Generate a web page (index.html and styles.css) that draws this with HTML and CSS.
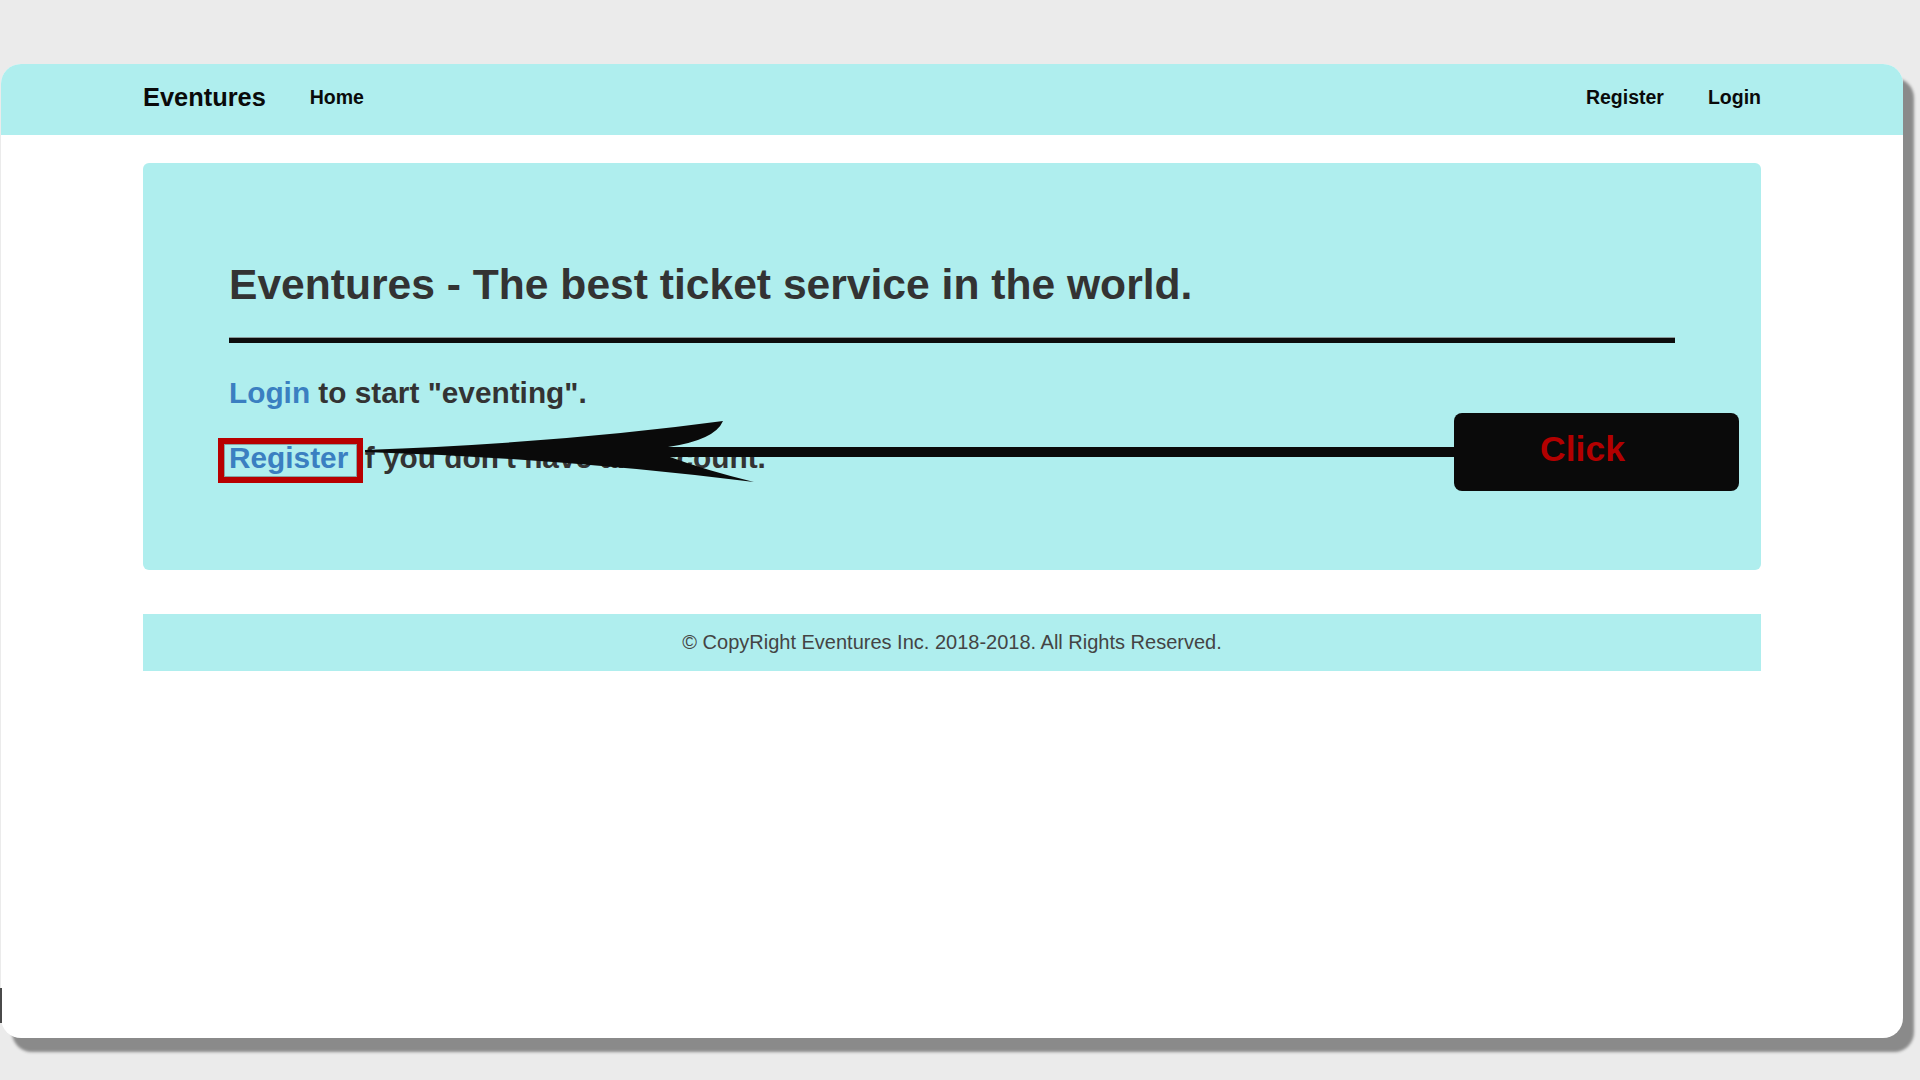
FILE: index.html
```html
<!DOCTYPE html>
<html lang="en">
<head>
<meta charset="utf-8">
<title>Eventures</title>
<link rel="stylesheet" href="styles.css">
</head>
<body>
<div class="page">
  <div class="card">
    <nav class="navbar">
      <div class="container nav-inner">
        <div class="nav-left">
          <a class="brand" href="#">Eventures</a>
          <a class="nav-link" href="#">Home</a>
        </div>
        <div class="nav-right">
          <a class="nav-link" href="#">Register</a>
          <a class="nav-link" href="#">Login</a>
        </div>
      </div>
    </nav>
    <main class="container">
      <section class="jumbotron">
        <h1 class="title">Eventures - The best ticket service in the world.</h1>
        <hr class="rule">
        <p class="lead"><a class="link" href="#">Login</a> to start "eventing".</p>
        <p class="lead lead-second"><a class="link" href="#">Register</a> if you don't have an account.</p>
      </section>
      <footer class="footer">© CopyRight Eventures Inc. 2018-2018. All Rights Reserved.</footer>
    </main>
  </div>
</div>

<div class="mark-box"></div>
<svg class="arrow" width="1920" height="1080" viewBox="0 0 1920 1080" aria-hidden="true">
  <path d="M 365 450 Q 560 443 723 421 Q 715 440 668 447 L 1458 447 L 1458 457 L 670 457 Q 705 470 754 482 Q 560 458 365 452 Z" fill="#0a0a0a"/>
</svg>
<div class="click-box"><span class="click-text">Click</span></div>
<div class="edge-mark"></div>
</body>
</html>
```
FILE: styles.css
```css
html, body {
  margin: 0;
  padding: 0;
}

body {
  background: #ebebeb;
  font-family: "Liberation Sans", Arial, Helvetica, sans-serif;
  width: 1920px;
  height: 1080px;
  overflow: hidden;
}

.page {
  padding: 64px 0 0 1px;
}

.card {
  width: 1902px;
  height: 974px;
  background: #ffffff;
  border-radius: 20px;
  box-shadow: 11px 14px 3px #8a8a8a;
  overflow: hidden;
}

.container {
  width: 1618px;
  margin: 0 auto;
}

.navbar {
  height: 71px;
  background: #afeeee;
}

.nav-inner {
  height: 100%;
  box-sizing: border-box;
  padding-bottom: 4px;
  display: flex;
  align-items: center;
  justify-content: space-between;
}

.nav-left,
.nav-right {
  display: flex;
  align-items: center;
  gap: 44px;
}

.brand {
  font-size: 25.4px;
  font-weight: bold;
  color: #0a0a0a;
  text-decoration: none;
}

.nav-link {
  font-size: 19.5px;
  font-weight: bold;
  color: #0a0a0a;
  text-decoration: none;
}

.jumbotron {
  margin-top: 28px;
  background: #afeeee;
  border-radius: 6px;
  padding: 98px 86px 92px;
}

.title {
  margin: 0;
  font-size: 42.6px;
  line-height: 46.75px;
  font-weight: bold;
  color: #333333;
}

.rule {
  margin: 30px 0 29.25px;
  height: 5px;
  border: 0;
  background: #0d0d0d;
  box-shadow: 0 -1px 0 #8a9a9a;
}

.lead {
  margin: 0;
  font-size: 29.8px;
  line-height: 41px;
  font-weight: bold;
  color: #333333;
}

.lead-second {
  margin-top: 24px;
}

.link {
  color: #3a7fc1;
  text-decoration: none;
}

.footer {
  margin-top: 44px;
  height: 57px;
  line-height: 57px;
  background: #afeeee;
  text-align: center;
  font-size: 20px;
  color: #444444;
}

/* annotation overlays */
.mark-box {
  position: absolute;
  left: 218px;
  top: 438px;
  width: 133px;
  height: 33px;
  border: 6px solid #b80000;
  box-shadow: inset 0 0 0 1px #8aa3a3;
}

.arrow {
  position: absolute;
  left: 0;
  top: 0;
  pointer-events: none;
}

.click-box {
  position: absolute;
  left: 1454px;
  top: 413px;
  width: 285px;
  height: 78px;
  box-sizing: border-box;
  padding-right: 28px;
  padding-bottom: 5px;
  background: #0a0a0a;
  border-radius: 8px;
  display: flex;
  align-items: center;
  justify-content: center;
}

.click-text {
  font-size: 35.5px;
  font-weight: bold;
  color: #b30000;
}

.edge-mark {
  position: absolute;
  left: 0;
  top: 988px;
  width: 2px;
  height: 35px;
  background: #4a4a4a;
}
```
